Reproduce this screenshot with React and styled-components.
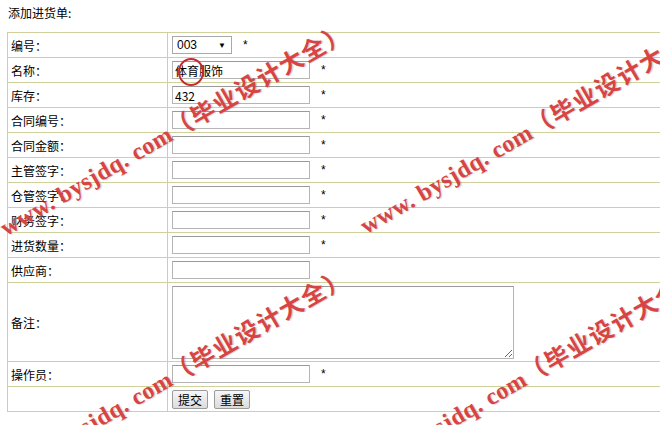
import styled, { createGlobalStyle } from 'styled-components'

const GlobalStyle = createGlobalStyle`
  html, body {
    margin: 0;
    padding: 0;
    background: #fff;
    overflow: hidden;
  }
  body {
    font-family: "Noto Sans CJK SC", "Liberation Sans", sans-serif;
    font-size: 12px;
    color: #000;
  }
`;

const Page = styled.div`
  position: relative;
  width: 660px;
  height: 425px;
  overflow: hidden;
  padding: 6px 0 0 7px;
  box-sizing: border-box;
`;

const Title = styled.div`
  height: 14px;
  line-height: 14px;
  padding-left: 1px;
  margin-bottom: 12px;
`;

const FormTable = styled.table`
  width: 720px;
  border-collapse: collapse;
  border: 1px solid #d0d09a;
`;

const Row = styled.tr`
  height: ${p => p.$tall ? 79 : 25}px;
`;

const LabelCell = styled.td`
  width: 156px;
  padding: 0 0 0 3px;
  border: 1px solid #d0d09a;
  vertical-align: middle;
  white-space: nowrap;
`;

const FieldCell = styled.td`
  padding: 0 0 0 4px;
  border: 1px solid #d0d09a;
  vertical-align: middle;
`;

const FieldLine = styled.div`
  display: flex;
  align-items: center;
`;

const TextInput = styled.input`
  width: 138px;
  height: 18px;
  box-sizing: border-box;
  border: 1px solid #b5b5b5;
  border-top-color: #9a9a9a;
  padding: 0 2px;
  font: 12px "Noto Sans CJK SC", "Liberation Sans", sans-serif;
  color: #000;
  outline: none;
`;

const SelectBox = styled.div`
  width: 60px;
  height: 18px;
  box-sizing: border-box;
  border: 1px solid #a9a9a9;
  display: flex;
  align-items: center;
  justify-content: space-between;
  padding: 0 5px 0 4px;
  font-family: "Liberation Sans", sans-serif;
  font-size: 12px;
`;

const Arrow = styled.span`
  font-size: 8px;
`;

const Star = styled.span`
  margin-left: ${p => p.$gap}px;
  font-family: "Liberation Sans", sans-serif;
  font-size: 12px;
`;

const Note = styled.textarea`
  width: 342px;
  height: 73px;
  box-sizing: border-box;
  border: 1px solid #b5b5b5;
  border-top-color: #9a9a9a;
  display: block;
  resize: both;
  outline: none;
`;

const Buttons = styled.div`
  display: flex;
  gap: 6px;
`;

const Button = styled.button`
  height: 19px;
  padding: 0 5px;
  font: 12px "Noto Sans CJK SC", sans-serif;
  line-height: 15px;
  border: 1px solid #9b9b9b;
  border-radius: 2px;
  background: linear-gradient(#f6f6f6, #dcdcdc);
  color: #000;
`;

const Watermark = styled.span`
  position: absolute;
  left: ${p => p.$x}px;
  top: ${p => p.$y}px;
  transform-origin: 0 100%;
  transform: rotate(-30deg);
  white-space: nowrap;
  font-family: "Liberation Serif", "Noto Sans CJK SC", serif;
  font-weight: bold;
  font-size: 24px;
  line-height: 24px;
  letter-spacing: 0.5px;
  color: #d84444;
  text-shadow: 1px 1px 1px rgba(120, 120, 120, 0.35);
  pointer-events: none;
`;

const WatermarkCjk = styled.span`
  letter-spacing: 1.5px;
`;

const Circle = styled.span`
  position: absolute;
  left: 178px;
  top: 58px;
  width: 22px;
  height: 24px;
  border: 2px solid #c82a2a;
  border-radius: 50%;
  pointer-events: none;
`;

const fields = [
  { label: '合同编号：' },
  { label: '合同金额：' },
  { label: '主管签字：' },
  { label: '仓管签字：' },
  { label: '财务签字：' },
  { label: '进货数量：' },
]

const marks = [
  { x: 8, y: 216 },
  { x: 368, y: 214 },
  { x: 8, y: 461 },
  { x: 362, y: 461 },
]

export default function App() {
  return (
    <>
      <GlobalStyle />
      <Page>
        <Title>添加进货单:</Title>
        <FormTable>
          <tbody>
            <Row>
              <LabelCell>编号：</LabelCell>
              <FieldCell>
                <FieldLine>
                  <SelectBox>003<Arrow>▼</Arrow></SelectBox>
                  <Star $gap={11}>*</Star>
                </FieldLine>
              </FieldCell>
            </Row>
            <Row>
              <LabelCell>名称：</LabelCell>
              <FieldCell>
                <FieldLine>
                  <TextInput defaultValue="体育服饰" />
                  <Star $gap={11}>*</Star>
                </FieldLine>
              </FieldCell>
            </Row>
            <Row>
              <LabelCell>库存：</LabelCell>
              <FieldCell>
                <FieldLine>
                  <TextInput defaultValue="432" />
                  <Star $gap={11}>*</Star>
                </FieldLine>
              </FieldCell>
            </Row>
            {fields.map(f => (
              <Row key={f.label}>
                <LabelCell>{f.label}</LabelCell>
                <FieldCell>
                  <FieldLine>
                    <TextInput />
                    <Star $gap={11}>*</Star>
                  </FieldLine>
                </FieldCell>
              </Row>
            ))}
            <Row>
              <LabelCell>供应商：</LabelCell>
              <FieldCell>
                <FieldLine>
                  <TextInput />
                </FieldLine>
              </FieldCell>
            </Row>
            <Row $tall>
              <LabelCell>备注：</LabelCell>
              <FieldCell>
                <Note />
              </FieldCell>
            </Row>
            <Row>
              <LabelCell>操作员：</LabelCell>
              <FieldCell>
                <FieldLine>
                  <TextInput />
                  <Star $gap={11}>*</Star>
                </FieldLine>
              </FieldCell>
            </Row>
            <Row>
              <LabelCell></LabelCell>
              <FieldCell>
                <Buttons>
                  <Button type="button">提交</Button>
                  <Button type="button">重置</Button>
                </Buttons>
              </FieldCell>
            </Row>
          </tbody>
        </FormTable>
        <Circle />
        {marks.map((m, i) => (
          <Watermark key={i} $x={m.x} $y={m.y}>
            www. bysjdq. com<WatermarkCjk>（毕业设计大全）</WatermarkCjk>
          </Watermark>
        ))}
      </Page>
    </>
  )
}
